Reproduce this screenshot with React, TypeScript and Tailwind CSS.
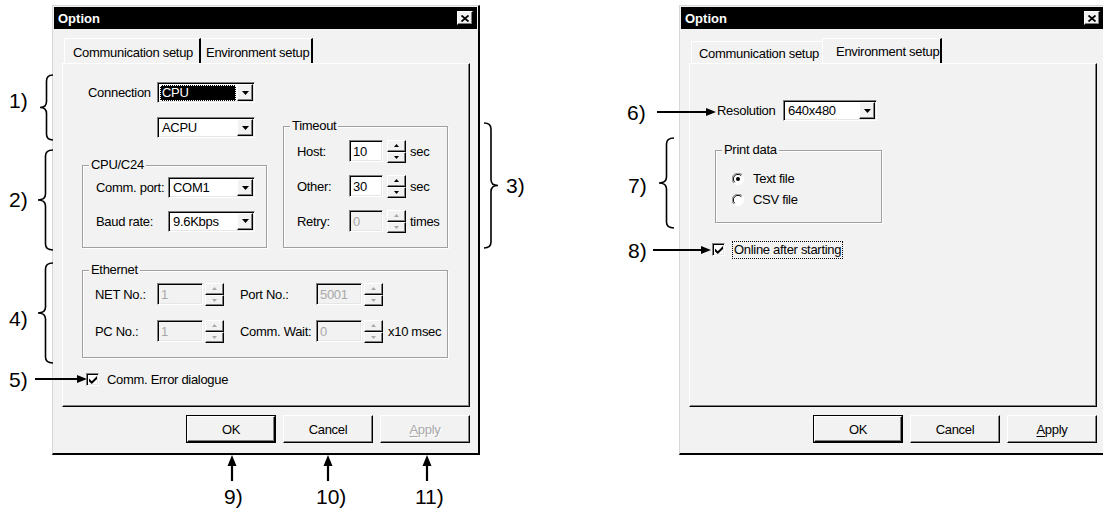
import React from 'react';

const sunken =
  'border border-t-[#808080] border-l-[#808080] border-b-white border-r-white shadow-[inset_1px_1px_0_#000,inset_-1px_-1px_0_#e6e6e6]';
const raised =
  'border border-t-white border-l-white border-b-black border-r-black shadow-[inset_-1px_-1px_0_#808080]';
const panel =
  'w-[408px] h-[344px] ml-[8px] bg-[#f2f2f2] border border-t-white border-l-white border-b-black border-r-black shadow-[inset_-1px_-1px_0_#808080] flex flex-col';

const leftBrace = (x1: number, x0: number, y0: number, y1: number) => {
  const xm = (x0 + x1) / 2;
  const ym = (y0 + y1) / 2;
  const r = 6;
  return `M${x1} ${y0} Q${xm} ${y0} ${xm} ${y0 + r} L${xm} ${ym - r} Q${xm} ${ym} ${x0} ${ym} Q${xm} ${ym} ${xm} ${ym + r} L${xm} ${y1 - r} Q${xm} ${y1} ${x1} ${y1}`;
};

function Combo({ value, cls, selected }: { value: string; cls: string; selected?: boolean }) {
  return (
    <div className={`${cls} h-[21px] ${sunken} bg-white flex p-[1px]`}>
      <div className="flex-1 flex items-center pl-[1px] pr-[1px]">
        {selected ? (
          <span className="w-full h-[16px] bg-black text-white pl-[2px] leading-[16px] outline outline-1 outline-dotted outline-white -outline-offset-1">
            {value}
          </span>
        ) : (
          <span className="pl-[2px]">{value}</span>
        )}
      </div>
      <div className={`w-[16px] h-full ${raised} bg-[#f2f2f2] flex items-center justify-center`}>
        <svg width="7" height="4" viewBox="0 0 7 4">
          <path d="M0 0H7L3.5 4Z" fill="#000" />
        </svg>
      </div>
    </div>
  );
}

function Edit({ value, cls, disabled }: { value: string; cls: string; disabled?: boolean }) {
  return (
    <div
      className={`${cls} h-[22px] ${sunken} ${disabled ? 'bg-[#f2f2f2] text-[#a8a8a8]' : 'bg-white text-black'} flex items-center pl-[3px]`}
    >
      {value}
    </div>
  );
}

function Spin({ disabled }: { disabled?: boolean }) {
  const c = disabled ? '#a8a8a8' : '#000';
  return (
    <div className="w-[19px] h-[23px] flex flex-col">
      <div className={`h-[12px] ${raised} bg-[#f2f2f2] flex items-center justify-center`}>
        <svg width="5" height="3" viewBox="0 0 5 3">
          <path d="M2.5 0L5 3H0Z" fill={c} />
        </svg>
      </div>
      <div className={`h-[11px] ${raised} bg-[#f2f2f2] flex items-center justify-center`}>
        <svg width="5" height="3" viewBox="0 0 5 3">
          <path d="M0 0H5L2.5 3Z" fill={c} />
        </svg>
      </div>
    </div>
  );
}

function Group({ title, cls, children }: { title: string; cls: string; children: React.ReactNode }) {
  return (
    <div className={`${cls} border border-[#a0a0a0] shadow-[inset_1px_1px_0_#fff,1px_1px_0_#fff] flex flex-col`}>
      <span className="-mt-[8px] ml-[6px] self-start bg-[#f2f2f2] px-[2px] leading-[14px]">{title}</span>
      {children}
    </div>
  );
}

function Check() {
  return (
    <div className={`w-[13px] h-[13px] ${sunken} bg-white flex items-center justify-center`}>
      <svg width="8" height="8" viewBox="0 0 8 8">
        <path d="M0 2.6L2.8 5.2L8 0V3L2.8 8L0 5.4Z" fill="#000" />
      </svg>
    </div>
  );
}

function Radio({ on }: { on?: boolean }) {
  return (
    <svg width="12" height="12" viewBox="0 0 12 12">
      <circle cx="6" cy="6" r="5.5" fill="#fff" />
      <path d="M10.2 1.8A5.5 5.5 0 0 0 1.8 10.2" stroke="#808080" fill="none" />
      <path d="M9.3 2.7A4.5 4.5 0 0 0 2.7 9.3" stroke="#000" fill="none" />
      <path d="M10.2 1.8A5.5 5.5 0 0 1 1.8 10.2" stroke="#fff" fill="none" />
      {on && <circle cx="6" cy="6" r="2" fill="#000" />}
    </svg>
  );
}

function Btn({ children, def, disabled }: { children: React.ReactNode; def?: boolean; disabled?: boolean }) {
  return (
    <div className={`w-[90px] h-[28px] ${def ? 'border border-black' : ''}`}>
      <div
        className={`w-full h-full ${raised} bg-[#f2f2f2] flex items-center justify-center ${disabled ? 'text-[#a8a8a8] [text-shadow:1px_1px_0_#fff]' : 'text-black'}`}
      >
        {children}
      </div>
    </div>
  );
}

function SpinRow({ label, value, unit, cls, disabled }: { label: string; value: string; unit: string; cls: string; disabled?: boolean }) {
  return (
    <div className={`${cls} flex items-center h-[22px] pl-[13px]`}>
      <span className="w-[52px]">{label}</span>
      <Edit cls="w-[34px]" value={value} disabled={disabled} />
      <div className="ml-[4px]">
        <Spin disabled={disabled} />
      </div>
      <span className="ml-[4px]">{unit}</span>
    </div>
  );
}

function Dialog({ tabs, children }: { tabs: React.ReactNode; children: React.ReactNode }) {
  return (
    <div className="w-[428px] h-[450px] shrink-0 bg-[#f2f2f2] border-t border-l border-t-[#d8d8d8] border-l-[#d8d8d8] border-r-2 border-b-2 border-r-black border-b-black p-[1px] flex flex-col">
      <div className="h-[22px] bg-black flex items-center justify-between pl-[4px] pr-[4px]">
        <span className="text-white font-bold text-[13px] tracking-normal">Option</span>
        <div className={`w-[16px] h-[14px] ${raised} bg-[#f2f2f2] flex items-center justify-center`}>
          <svg width="8" height="7" viewBox="0 0 8 7">
            <path d="M0.5 0.5L7.5 6.5M7.5 0.5L0.5 6.5" stroke="#000" strokeWidth="1.8" />
          </svg>
        </div>
      </div>
      {tabs}
      {children}
    </div>
  );
}

function CommDialog() {
  return (
    <Dialog
      tabs={
        <div className="flex h-[25px] ml-[10px] mt-[9px]">
          <div className="h-full pl-[8px] pr-[6px] pt-[6px] border-t border-l border-white border-r-2 border-r-black">
            Communication setup
          </div>
          <div className="h-full pl-[5px] pr-[2px] pt-[6px] border-t border-t-white border-r-2 border-r-black">
            Environment setup
          </div>
        </div>
      }
    >
      <div className={`${panel} pl-[19px] pt-[18px]`}>
        <div className="flex gap-[16px]">
          <div className="w-[185px] flex flex-col">
            <div className="flex items-center h-[21px]">
              <span className="w-[75px] pl-[6px]">Connection</span>
              <Combo cls="w-[98px]" value="CPU" selected />
            </div>
            <div className="flex items-center h-[21px] mt-[14px] pl-[75px]">
              <Combo cls="w-[98px]" value="ACPU" />
            </div>
            <Group title="CPU/C24" cls="mt-[27px] h-[83px]">
              <div className="flex items-center h-[21px] mt-[5px] pl-[13px]">
                <span className="w-[72px]">Comm. port:</span>
                <Combo cls="w-[87px]" value="COM1" />
              </div>
              <div className="flex items-center h-[22px] mt-[12px] pl-[13px]">
                <span className="w-[72px]">Baud rate:</span>
                <Combo cls="w-[87px]" value="9.6Kbps" />
              </div>
            </Group>
          </div>
          <div className="w-[165px] pt-[44px]">
            <Group title="Timeout" cls="h-[122px]">
              <SpinRow cls="mt-[7px]" label="Host:" value="10" unit="sec" />
              <SpinRow cls="mt-[13px]" label="Other:" value="30" unit="sec" />
              <SpinRow cls="mt-[13px]" label="Retry:" value="0" unit="times" disabled />
            </Group>
          </div>
        </div>
        <Group title="Ethernet" cls="mt-[22px] w-[366px] h-[88px]">
          <div className="flex items-center h-[22px] mt-[6px] pl-[12px]">
            <span className="w-[62px]">NET No.:</span>
            <Edit cls="w-[46px]" value="1" disabled />
            <div className="ml-[2px]">
              <Spin disabled />
            </div>
            <span className="ml-[16px] w-[76px]">Port No.:</span>
            <Edit cls="w-[46px]" value="5001" disabled />
            <div className="ml-[2px]">
              <Spin disabled />
            </div>
          </div>
          <div className="flex items-center h-[22px] mt-[15px] pl-[12px]">
            <span className="w-[62px]">PC No.:</span>
            <Edit cls="w-[46px]" value="1" disabled />
            <div className="ml-[2px]">
              <Spin disabled />
            </div>
            <span className="ml-[16px] w-[76px]">Comm. Wait:</span>
            <Edit cls="w-[46px]" value="0" disabled />
            <div className="ml-[2px]">
              <Spin disabled />
            </div>
            <span className="ml-[5px]">x10 msec</span>
          </div>
        </Group>
        <div className="flex items-center h-[13px] mt-[15px] ml-[4px] gap-[8px]">
          <Check />
          <span>Comm. Error dialogue</span>
        </div>
      </div>
      <div className="flex justify-end gap-[7px] mt-[8px] pr-[7px]">
        <Btn def>OK</Btn>
        <Btn>Cancel</Btn>
        <Btn disabled>
          <span>
            <span className="underline underline-offset-2">A</span>pply
          </span>
        </Btn>
      </div>
    </Dialog>
  );
}

function EnvDialog() {
  return (
    <Dialog
      tabs={
        <div className="flex items-end h-[25px] ml-[10px] mt-[9px]">
          <div className="h-[22px] pl-[7px] pr-[3px] pt-[4px] border-t border-l border-white">Communication setup</div>
          <div className="h-full pl-[13px] pr-[1px] pt-[5px] border-t border-l border-white border-r-2 border-r-black">
            Environment setup
          </div>
        </div>
      }
    >
      <div className={`${panel} pl-[22px] pt-[36px]`}>
        <div className="flex items-center h-[21px] pl-[5px]">
          <span className="w-[66px]">Resolution</span>
          <Combo cls="w-[94px]" value="640x480" />
        </div>
        <Group title="Print data" cls="mt-[29px] ml-[3px] w-[167px] h-[73px]">
          <div className="flex items-center h-[13px] mt-[15px] pl-[16px] gap-[9px]">
            <Radio on />
            <span>Text file</span>
          </div>
          <div className="flex items-center h-[13px] mt-[8px] pl-[16px] gap-[9px]">
            <Radio />
            <span>CSV file</span>
          </div>
        </Group>
        <div className="flex items-center h-[13px] mt-[20px] gap-[7px]">
          <Check />
          <span className="border border-dotted border-black px-[1px] leading-[16px]">Online after starting</span>
        </div>
      </div>
      <div className="flex justify-end gap-[7px] mt-[8px] pr-[7px]">
        <Btn def>OK</Btn>
        <Btn>Cancel</Btn>
        <Btn>
          <span>
            <span className="underline underline-offset-2">A</span>pply
          </span>
        </Btn>
      </div>
    </Dialog>
  );
}

function Note({ cls, children }: { cls: string; children: React.ReactNode }) {
  return <span className={`absolute ${cls} text-[21px] leading-none tracking-normal text-black`}>{children}</span>;
}

export default function App() {
  return (
    <div className="relative w-[1103px] h-[511px] overflow-hidden bg-white font-['Liberation_Sans',Arial,sans-serif] text-[13px] tracking-[-0.3px] leading-[15px] text-black">
      <div className="flex pl-[52px] pt-[5px] gap-[199px]">
        <CommDialog />
        <EnvDialog />
      </div>

      <svg className="absolute inset-0 pointer-events-none" width="1103" height="511">
        <g stroke="#000" strokeWidth="1.6" fill="none">
          <path d={leftBrace(53, 40, 75, 140)} />
          <path d={leftBrace(53, 38, 150, 250)} />
          <path d={leftBrace(53, 38, 263, 363)} />
          <path d={leftBrace(484, 498, 123, 248)} />
          <path d={leftBrace(674, 659, 138, 228)} />
        </g>
        <g stroke="#000" strokeWidth="2.2">
          <path d="M35 379H78" />
          <path d="M657 112H707" />
          <path d="M653 250H702" />
          <path d="M232 464V481" />
          <path d="M328 464V481" />
          <path d="M427 464V481" />
        </g>
        <g fill="#000">
          <path d="M77 375L87 379L77 383Z" />
          <path d="M706 108L716 112L706 116Z" />
          <path d="M701 246L711 250L701 254Z" />
          <path d="M232 455L236.5 466H227.5Z" />
          <path d="M328 455L332.5 466H323.5Z" />
          <path d="M427 455L431.5 466H422.5Z" />
        </g>
      </svg>

      <Note cls="left-[9px] top-[90px]">1)</Note>
      <Note cls="left-[9px] top-[189px]">2)</Note>
      <Note cls="left-[506px] top-[175px]">3)</Note>
      <Note cls="left-[9px] top-[308px]">4)</Note>
      <Note cls="left-[9px] top-[369px]">5)</Note>
      <Note cls="left-[627px] top-[102px]">6)</Note>
      <Note cls="left-[628px] top-[175px]">7)</Note>
      <Note cls="left-[628px] top-[240px]">8)</Note>
      <Note cls="left-[224px] top-[486px]">9)</Note>
      <Note cls="left-[316px] top-[486px]">10)</Note>
      <Note cls="left-[415px] top-[486px]">11)</Note>
    </div>
  );
}
